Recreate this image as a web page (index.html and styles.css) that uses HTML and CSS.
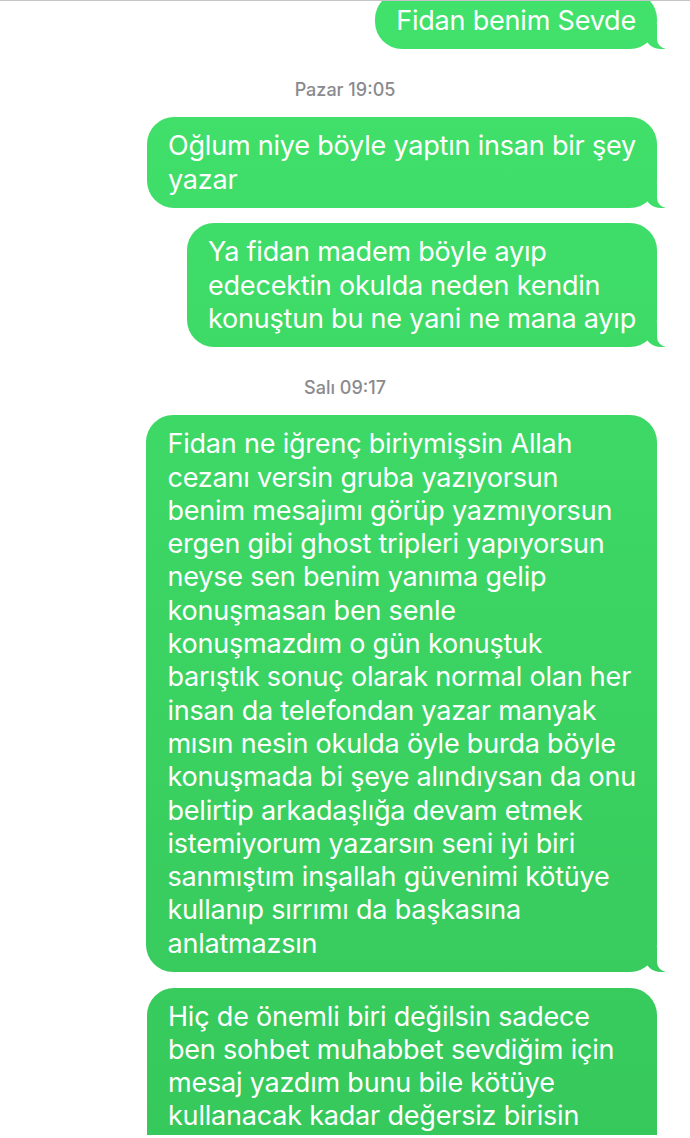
FILE: index.html
```html
<!DOCTYPE html>
<html lang="tr">
<head>
<meta charset="utf-8">
<title>Mesajlar</title>
<link rel="stylesheet" href="styles.css">
</head>
<body>
<main class="screen">
  <div class="thread">
    <p class="bubble tail">Fidan benim Sevde</p>
    <p class="stamp"><span class="day">Pazar</span> 19:05</p>
    <p class="bubble tail">Oğlum niye böyle yaptın insan bir şey<br>yazar</p>
    <p class="bubble tail">Ya fidan madem böyle ayıp<br>edecektin okulda neden kendin<br>konuştun bu ne yani ne mana ayıp</p>
    <p class="stamp"><span class="day">Salı</span> 09:17</p>
    <p class="bubble tail">Fidan ne iğrenç biriymişsin Allah<br>cezanı versin gruba yazıyorsun<br>benim mesajımı görüp yazmıyorsun<br>ergen gibi ghost tripleri yapıyorsun<br>neyse sen benim yanıma gelip<br>konuşmasan ben senle<br>konuşmazdım o gün konuştuk<br>barıştık sonuç olarak normal olan her<br>insan da telefondan yazar manyak<br>mısın nesin okulda öyle burda böyle<br>konuşmada bi şeye alındıysan da onu<br>belirtip arkadaşlığa devam etmek<br>istemiyorum yazarsın seni iyi biri<br>sanmıştım inşallah güvenimi kötüye<br>kullanıp sırrımı da başkasına<br>anlatmazsın</p>
    <p class="bubble last">Hiç de önemli biri değilsin sadece<br>ben sohbet muhabbet sevdiğim için<br>mesaj yazdım bunu bile kötüye<br>kullanacak kadar değersiz birisin</p>
  </div>
</main>
</body>
</html>
```
FILE: styles.css
```css
html, body {
  margin: 0;
  padding: 0;
  background: #ffffff;
}

.screen {
  display: block;
  width: 690px;
  height: 1134px;
  overflow: hidden;
  border-top: 1px solid #c4c4c6;
  background: #ffffff;
  font-family: Inter, "Noto Sans", "DejaVu Sans", sans-serif;
}

.thread {
  display: flex;
  flex-direction: column;
  align-items: flex-end;
  margin-top: -9px;
}

.bubble {
  position: relative;
  box-sizing: border-box;
  width: fit-content;
  margin: 15.5px 33px 0 0;
  padding: 12px 21px;
  border-radius: 27px;
  background: linear-gradient(to bottom, #41e26c 0px, #36c85b 1138px) fixed;
  color: #ffffff;
  font-size: 27px;
  line-height: 33.3px;
  letter-spacing: -0.2px;
  white-space: nowrap;
}

.bubble:first-child {
  margin-top: 0;
}

.tail::before,
.tail::after {
  content: "";
  position: absolute;
  bottom: 0;
  height: 25px;
}

.tail::before {
  right: -8px;
  width: 20px;
  background: linear-gradient(to bottom, #41e26c 0px, #36c85b 1138px) fixed;
  border-bottom-left-radius: 16px 14px;
}

.tail::after {
  right: -26px;
  width: 26px;
  background: #ffffff;
  border-bottom-left-radius: 10px;
}

.last {
  width: 510px;
  height: 200px;
}

.stamp {
  align-self: stretch;
  margin: 31px 0 1.5px;
  text-align: center;
  color: #8a8a8e;
  font-size: 18px;
  line-height: 20px;
  font-weight: 500;
}

.stamp + .bubble {
  margin-top: 15.5px;
}

.day {
  font-weight: 500;
}
```
